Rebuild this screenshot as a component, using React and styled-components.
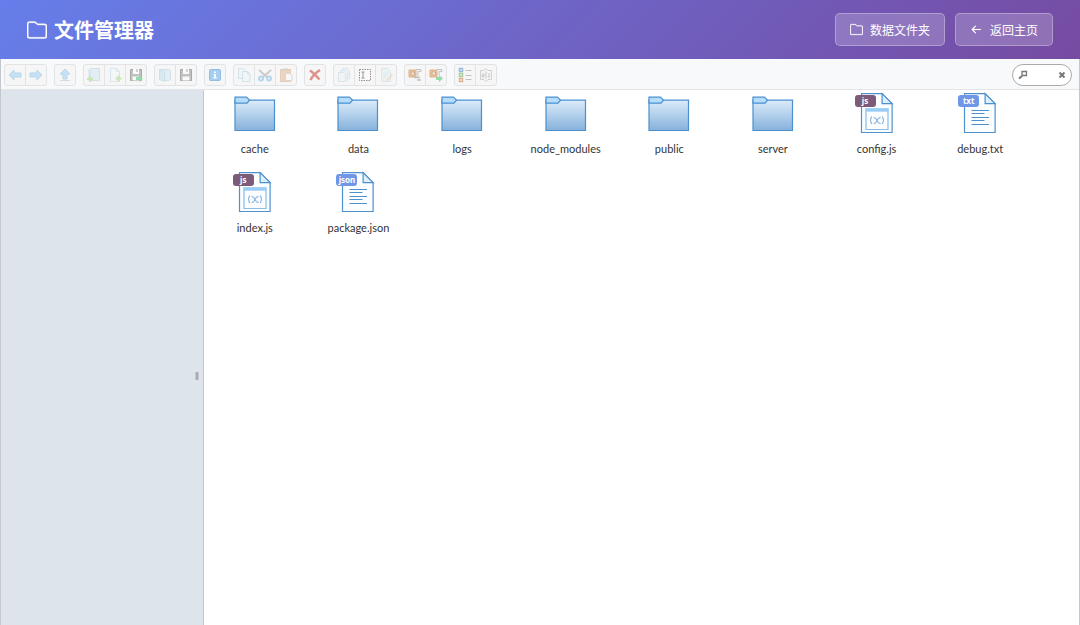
import React, { useState } from "react";
import styled, { createGlobalStyle } from "styled-components";

const GlobalStyle = createGlobalStyle`
  * {
    box-sizing: border-box;
  }
  body {
    margin: 0;
    font-family: "Noto Sans", "Noto Sans CJK SC", sans-serif;
    background: #fff;
  }
`;

const Page = styled.div`
  display: flex;
  flex-direction: column;
  min-height: 100vh;
`;

const Header = styled.header`
  display: flex;
  align-items: center;
  justify-content: space-between;
  height: 59px;
  padding: 0 27px;
  color: #fff;
  background: linear-gradient(135deg, #667eea 0%, #764ba2 100%);
`;

const Title = styled.h1`
  display: flex;
  align-items: center;
  gap: 7px;
  margin: 0;
  font-family: "Noto Sans CJK SC", sans-serif;
  font-size: 20px;
  line-height: 28px;
  font-weight: 700;
`;

const Actions = styled.nav`
  display: flex;
  gap: 10px;
`;

const ActionLink = styled.a`
  display: flex;
  align-items: center;
  gap: 7px;
  height: 33px;
  padding: 0 14px;
  font-family: "Noto Sans CJK SC", sans-serif;
  font-size: 12px;
  color: #fff;
  text-decoration: none;
  background: rgba(255, 255, 255, 0.2);
  border: 1px solid rgba(255, 255, 255, 0.3);
  border-radius: 5px;
`;

const Manager = styled.main`
  display: flex;
  flex-direction: column;
  flex: 1;
  border: solid #c4c8cc;
  border-width: 0 1px;
`;

const Toolbar = styled.div`
  display: flex;
  align-items: center;
  gap: 7px;
  height: 31px;
  padding: 2px 7px 0 3px;
  background: #f8f9fb;
  border-bottom: 1px solid #e2e4e6;
`;

const Group = styled.div`
  display: flex;
  border: 1px solid #e2e3e5;
  border-radius: 3px;
  background: #f6f6f6;
`;

const ToolButton = styled.button`
  display: flex;
  align-items: center;
  justify-content: center;
  width: 20px;
  height: 20px;
  padding: 0;
  border: none;
  background: transparent;
  & + & {
    width: 21px;
    border-left: 1px solid #e2e3e5;
  }
  svg {
    opacity: ${({ $strong }) => ($strong ? 0.48 : 0.33)};
  }
`;

const Search = styled.form`
  display: flex;
  align-items: center;
  width: 60px;
  height: 22px;
  margin-left: auto;
  padding: 0 5px;
  background: #fff;
  border: 1px solid #aaa;
  border-radius: 11px;
`;

const SearchInput = styled.input`
  flex: 1;
  min-width: 0;
  padding: 0 2px;
  border: none;
  outline: none;
  background: transparent;
  font-size: 11px;
`;

const SearchButton = styled.button`
  display: flex;
  padding: 0;
  border: none;
  background: transparent;
`;

const Workzone = styled.div`
  display: flex;
  flex: 1;
`;

const Sidebar = styled.aside`
  display: flex;
  align-items: center;
  justify-content: flex-end;
  width: 202px;
  padding: 0 4px 0 0;
  background: #dde4eb;
`;

const Handle = styled.div`
  width: 4px;
  height: 8px;
  margin-top: 36px;
  border: solid #c4c7cb;
  border-width: 0 1px;
  background: #a9adb2;
`;

const Files = styled.section`
  flex: 1;
  padding-right: 47px;
  background: #fff;
  box-shadow: inset 1px 0 0 #c3c6ca;
`;

const Grid = styled.div`
  display: grid;
  grid-template-columns: repeat(auto-fill, minmax(100px, 1fr));
  grid-auto-rows: 79px;
`;

const File = styled.div`
  display: flex;
  flex-direction: column;
  align-items: center;
  gap: 6px;
  padding-top: 1px;
`;

const Thumb = styled.div`
  position: relative;
  width: 48px;
  height: 44px;
`;

const Badge = styled.span`
  position: absolute;
  top: 4px;
  left: 2px;
  min-width: 21px;
  padding: 0 2px;
  border-radius: 3px;
  font-size: 8px;
  line-height: 12px;
  font-weight: 700;
  text-align: center;
  color: #fff;
  background: ${({ $color }) => $color};
`;

const FileName = styled.span`
  font-family: Lato, "Noto Sans", sans-serif;
  font-size: 11px;
  line-height: 16px;
  color: #333;
`;

const FolderOutline = ({ size }) => (
  <svg
    width={size}
    height={size}
    viewBox="0 0 16 16"
    fill="currentColor"
    stroke="currentColor"
    strokeWidth="0.3"
  >
    <path d="M2 1.200h3.900c.600 0 1.100.200 1.500.600l.900.900c.200.200.400.300.700.300H14a2 2 0 0 1 2 2v7.800a2 2 0 0 1-2 2H2a2 2 0 0 1-2-2V3.200a2 2 0 0 1 2-2zm0 1a1 1 0 0 0-1 1v9.600a1 1 0 0 0 1 1h12a1 1 0 0 0 1-1V5a1 1 0 0 0-1-1H9c-.600 0-1-.200-1.400-.600l-.800-.800c-.200-.300-.500-.400-.900-.400z" />
  </svg>
);

const ArrowLeft = () => (
  <svg
    width="13"
    height="13"
    viewBox="0 0 13 13"
    fill="none"
    stroke="currentColor"
    strokeWidth="1.2"
    strokeLinecap="round"
    strokeLinejoin="round"
  >
    <path d="M10.500 6.500H2.500M5.500 3.200L2.200 6.500l3.300 3.300" />
  </svg>
);

const page = "M3.500 1.500h6l3 3v10h-9z";
const plus = "M10.500 8.500h2v2h2v2h-2v2h-2v-2h-2v-2h2z";

const icons = {
  back: <path d="M2 8l5-5v3h7v4H7v3z" fill="#64b9ec" stroke="#3b9bdc" />,
  forward: <path d="M14 8L9 3v3H2v4h7v3z" fill="#64b9ec" stroke="#3b9bdc" />,
  up: (
    <>
      <path d="M8 2l5 5h-3v5H6V7H3z" fill="#64b9ec" stroke="#3b9bdc" />
      <path d="M3 13.500h10" stroke="#8fa9b8" />
    </>
  ),
  mkdir: (
    <>
      <path d="M3 2.500l2-1h8.500v12H3z" fill="#bfe0f0" stroke="#8cb8cc" />
      <path d="M3 3l2 1v10.500l-2-1z" fill="#9ccbe2" />
      <path d="M3 9h2v2h2v2H5v2H3v-2H1v-2h2z" fill="#6cc335" />
    </>
  ),
  mkfile: (
    <>
      <path d={page} fill="#f2f9fd" stroke="#9fc4d8" />
      <path d="M9.500 1.500v3h3" stroke="#9fc4d8" fill="none" />
      <path d={plus} fill="#6cc335" />
    </>
  ),
  upload: (
    <>
      <path d="M2.500 2.500h11v11h-11z" fill="#888" stroke="#555" />
      <path d="M5 2h6v5H5zM4.500 9.500h7v4h-7z" fill="#fff" />
      <path d="M9 2v3" stroke="#555" />
      <path d="M8 10h3V8l4 3.500-4 3.500v-2H8z" fill="#2bbf5b" />
    </>
  ),
  open: (
    <>
      <path d="M2.500 2.500h9l2 1v9l-2 1h-5z" fill="#bfe0f0" stroke="#8cb8cc" />
      <path d="M2.500 2.500l5 2v10l-5-2z" fill="#9fd0e8" stroke="#7fb4cc" />
    </>
  ),
  save: (
    <>
      <path d="M2.500 2.500h11v11h-11z" fill="#888" stroke="#555" />
      <path d="M5 2h6v5H5zM4.500 9.500h7v4h-7z" fill="#fff" />
      <path d="M9 2v3" stroke="#555" />
    </>
  ),
  info: (
    <>
      <rect x="2.500" y="2.500" width="11" height="11" rx="1" fill="#4da3ee" stroke="#2d7fd3" />
      <path d="M7 4.500h2v1.500H7zM6.500 7H9v3.500h1v1H6v-1h1V8h-.5z" fill="#fff" />
    </>
  ),
  copy: (
    <>
      <path d="M2.500 1.500h5l2 2v8h-7z" fill="#e4f3fb" stroke="#8fbad2" />
      <path d="M6.500 4.500h5l2.500 2.500v7.500H6.500z" fill="#e4f3fb" stroke="#8fbad2" />
      <path d="M11.500 4.500V7H14" stroke="#8fbad2" fill="none" />
    </>
  ),
  cut: (
    <>
      <path d="M2 3l9 8M14 3l-9 8" stroke="#777" strokeWidth="2" />
      <circle cx="4" cy="11.500" r="2" fill="none" stroke="#2f97dd" strokeWidth="2" />
      <circle cx="12" cy="11.500" r="2" fill="none" stroke="#2f97dd" strokeWidth="2" />
    </>
  ),
  paste: (
    <>
      <path d="M2.500 2.500h10v12h-10z" fill="#e0924a" stroke="#b97c3d" />
      <path d="M5 1.500h5v2H5z" fill="#888" />
      <path d="M7.500 6.500h4l2.500 2v5H7.500z" fill="#fff" stroke="#999" />
    </>
  ),
  remove: (
    <path
      d="M3 3.500c3 2 6 5 9.500 9M13 3C9 5.500 5.500 9 3.500 13"
      stroke="#c4251a"
      strokeWidth="2.500"
      fill="none"
    />
  ),
  duplicate: (
    <>
      <path d="M6.500 1.500h5l2 2v8h-7z" fill="#d8ecf7" stroke="#9cc3dc" />
      <path d="M4.500 3.500h5l2 2v8h-7z" fill="#d8ecf7" stroke="#9cc3dc" />
      <path d="M2.500 5.500h5l2 2v7h-7z" fill="#e4f2fa" stroke="#9cc3dc" />
    </>
  ),
  rename: (
    <>
      <rect x="2.500" y="2.500" width="11" height="11" fill="#fff" stroke="#222" strokeDasharray="1.500 1" />
      <path d="M4.500 5h3M6 5v6M4.500 11h3" stroke="#333" fill="none" />
    </>
  ),
  edit: (
    <>
      <path d={page} fill="#d4eaf7" stroke="#a4c8dd" />
      <path d="M5 6h5M5 8h4M5 10h3" stroke="#b5cedb" />
      <path d="M14 7l-5 5.500-1 1.500 2-.500 5-5.500z" fill="#f0a63a" />
    </>
  ),
  extract: (
    <>
      <path d="M9 2.500h5v2h-3v5" fill="none" stroke="#888" />
      <path d="M2 3h7v7H2z" fill="#e98a36" stroke="#b96a26" />
      <path d="M4 5h3.500v3H4z" fill="#fbe0c0" stroke="#a05a20" />
      <path d="M7 10.500h6M10 13h4" stroke="#888" strokeWidth="1.500" />
    </>
  ),
  archive: (
    <>
      <path d="M9 2.500h5v2h-3v4" fill="none" stroke="#888" />
      <path d="M2 3h7v7H2z" fill="#e98a36" stroke="#b96a26" />
      <path d="M4 5h3.500v3H4z" fill="#fbe0c0" stroke="#a05a20" />
      <path d="M8 10h3V8l4 3.500-4 3.500v-2H8z" fill="#2bbf5b" />
    </>
  ),
  view: (
    <>
      <path d="M2.500 1.500h3v3h-3z" fill="#fff" stroke="#2f78c8" strokeWidth="1.500" />
      <path d="M2.500 6.500h3v3h-3z" fill="#fff" stroke="#55a33a" strokeWidth="1.500" />
      <path d="M2.500 11.500h3v3h-3z" fill="#fff" stroke="#c8652f" strokeWidth="1.500" />
      <path d="M8.500 3.500h6M8.500 8.500h6M8.500 12.500h6" stroke="#888" />
    </>
  ),
  sort: (
    <>
      <path d="M8 1.500l2 2h3.500v9H10l-2 2-2-2H2.500v-9H6z" fill="#f4f4f4" stroke="#888" />
      <path d="M4 7h2v3H4V8.500h2M10 7h2l-2 3h2M8 4.500v7" stroke="#777" fill="none" />
    </>
  ),
};

const groups = [
  ["back", "forward"],
  ["up"],
  ["mkdir", "mkfile", "upload"],
  ["open", "save"],
  ["info"],
  ["copy", "cut", "paste"],
  ["remove"],
  ["duplicate", "rename", "edit"],
  ["extract", "archive"],
  ["view", "sort"],
];

const strongIcons = ["upload", "save", "info", "remove", "rename", "extract", "archive", "view"];

const files = [
  { name: "cache", type: "folder" },
  { name: "data", type: "folder" },
  { name: "logs", type: "folder" },
  { name: "node_modules", type: "folder" },
  { name: "public", type: "folder" },
  { name: "server", type: "folder" },
  { name: "config.js", type: "js" },
  { name: "debug.txt", type: "txt" },
  { name: "index.js", type: "js" },
  { name: "package.json", type: "json" },
];

const FolderIcon = () => (
  <svg width="48" height="44" viewBox="0 0 48 44" stroke="#4a90cf" strokeWidth="1.200">
    <defs>
      <linearGradient id="folder" x1="0" y1="0" x2="0" y2="1">
        <stop offset="0" stopColor="#dcecfb" />
        <stop offset="1" stopColor="#86b1db" />
      </linearGradient>
    </defs>
    <path d="M4 9.200h39.500v30.300H4z" fill="url(#folder)" />
    <path d="M4 6.200h11.500l3 3-2.500 3H4z" fill="#b5dcfb" />
  </svg>
);

const DocumentIcon = ({ code }) => (
  <svg width="48" height="44" viewBox="0 0 48 44" fill="none" stroke="#4f91cf" strokeWidth="1.200">
    <path d="M8.500 2.700h20.600l10 10v28.800H8.500z" fill="#fbfdff" />
    <path d="M29.100 2.700v10h10z" fill="#dcf0ff" />
    {code ? (
      <>
        <path d="M13 18h22v20.500H13z" stroke="#8bbce6" />
        <path d="M12.500 17.300h23v3.400h-23z" fill="#9bccf6" stroke="none" />
        <g stroke="#75a9d8" strokeWidth="1">
          <path d="M18.500 25.500q-2 3.700 0 7.500M29.500 25.500q2 3.700 0 7.500" />
          <path d="M20.500 26.500q3.200 0 3.200 3t-3.200 3M27.600 26.500q-3.200 0-3.200 3t3.200 3" />
        </g>
      </>
    ) : (
      <path d="M15.500 19.500H33M15.500 22.500h13M15.500 26.500H33M15.500 29.500h13M15.500 33.500H33" />
    )}
  </svg>
);

export default function App() {
  const [query, setQuery] = useState("");

  return (
    <Page>
      <GlobalStyle />
      <Header>
        <Title>
          <FolderOutline size={20} />
          文件管理器
        </Title>
        <Actions>
          <ActionLink href="#data">
            <FolderOutline size={13} />
            数据文件夹
          </ActionLink>
          <ActionLink href="#home">
            <ArrowLeft />
            返回主页
          </ActionLink>
        </Actions>
      </Header>
      <Manager>
        <Toolbar>
          {groups.map((group) => (
            <Group key={group[0]}>
              {group.map((name) => (
                <ToolButton
                  key={name}
                  type="button"
                  aria-label={name}
                  $strong={strongIcons.includes(name)}
                >
                  <svg width="16" height="16" viewBox="0 0 16 16">
                    {icons[name]}
                  </svg>
                </ToolButton>
              ))}
            </Group>
          ))}
          <Search onSubmit={(e) => e.preventDefault()}>
            <SearchButton type="submit" aria-label="search">
              <svg width="10" height="10" viewBox="0 0 10 10" fill="none" stroke="#777">
                <path d="M4 1.500h4.500v4H4z" strokeWidth="1.300" />
                <path d="M4 6L1 8.500" strokeWidth="2" />
              </svg>
            </SearchButton>
            <SearchInput
              aria-label="search files"
              value={query}
              onChange={(e) => setQuery(e.target.value)}
            />
            <SearchButton type="button" aria-label="clear" onClick={() => setQuery("")}>
              <svg width="8" height="8" viewBox="0 0 8 8" stroke="#777" strokeWidth="2">
                <path d="M1.500 1.500l5 5M6.500 1.500l-5 5" />
              </svg>
            </SearchButton>
          </Search>
        </Toolbar>
        <Workzone>
          <Sidebar>
            <Handle />
          </Sidebar>
          <Files>
            <Grid>
              {files.map(({ name, type }) => (
                <File key={name}>
                  <Thumb>
                    {type === "folder" ? <FolderIcon /> : <DocumentIcon code={type === "js"} />}
                    {type !== "folder" && (
                      <Badge $color={type === "js" ? "#7c5a79" : "#6f97e6"}>{type}</Badge>
                    )}
                  </Thumb>
                  <FileName>{name}</FileName>
                </File>
              ))}
            </Grid>
          </Files>
        </Workzone>
      </Manager>
    </Page>
  );
}
